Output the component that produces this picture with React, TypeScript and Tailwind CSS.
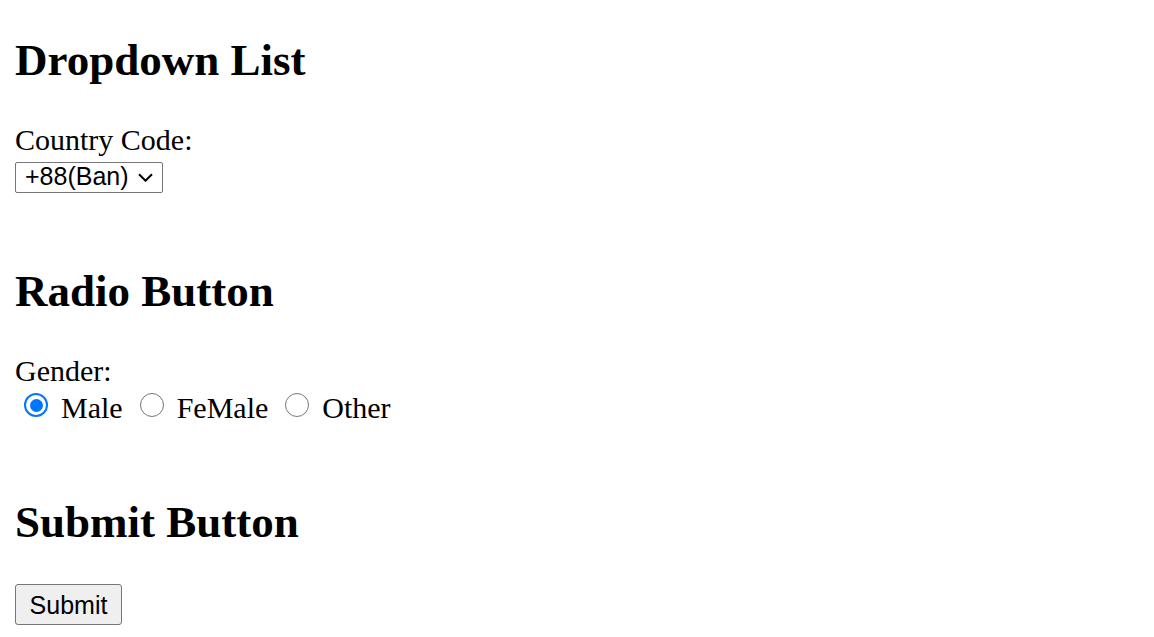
import React from "react";

function Radio({ checked, className = "" }: { checked?: boolean; className?: string }) {
  if (checked) {
    return (
      <span
        className={`flex h-[24px] w-[24px] shrink-0 items-center justify-center rounded-full border-2 border-[#0075ff] bg-white ${className}`}
      >
        <span className="h-[13px] w-[13px] rounded-full bg-[#0075ff]" />
      </span>
    );
  }
  return (
    <span
      className={`block h-[24px] w-[24px] shrink-0 rounded-full border-[1.5px] border-[#767676] bg-white ${className}`}
    />
  );
}

export default function App() {
  return (
    <div className="min-h-screen bg-white px-[15px] pt-[34px] font-['Liberation_Serif','Times_New_Roman',serif] text-[30px] leading-[34px] text-black">
      <h2 className="text-[45px] font-bold leading-[52px]">Dropdown List</h2>
      <div className="mt-[37px]">Country Code:</div>
      <div className="mt-[5px] flex h-[31px] w-[148px] items-center rounded-[2px] border border-[#767676] bg-white pb-[4px] pl-[9px] font-['Liberation_Sans',Arial,sans-serif] text-[25px]">
        <span className="leading-[28px]">+88(Ban)</span>
        <svg className="ml-[9px] mt-[4px] h-[9px] w-[15px] shrink-0" viewBox="0 0 15 9" fill="none">
          <path d="M1 1.2 L7.5 7.7 L14 1.2" stroke="#000" strokeWidth="2" />
        </svg>
      </div>

      <h2 className="mt-[72px] text-[45px] font-bold leading-[52px]">Radio Button</h2>
      <div className="mt-[37px]">Gender:</div>
      <div className="mt-[3px] flex h-[34px] items-start">
        <Radio checked className="ml-[9px] mt-[2px]" />
        <span className="ml-[13px]">Male</span>
        <Radio className="ml-[17px] mt-[2px]" />
        <span className="ml-[13px]">FeMale</span>
        <Radio className="ml-[17px] mt-[2px]" />
        <span className="ml-[13px]">Other</span>
      </div>

      <h2 className="mt-[71px] text-[45px] font-bold leading-[52px]">Submit Button</h2>
      <button
        type="submit"
        className="mt-[36px] flex h-[41px] w-[107px] items-center justify-center rounded-[3px] border border-[#767676] bg-[#efefef] font-['Liberation_Sans',Arial,sans-serif] text-[25px] leading-[28px] text-black"
      >
        Submit
      </button>
    </div>
  );
}
